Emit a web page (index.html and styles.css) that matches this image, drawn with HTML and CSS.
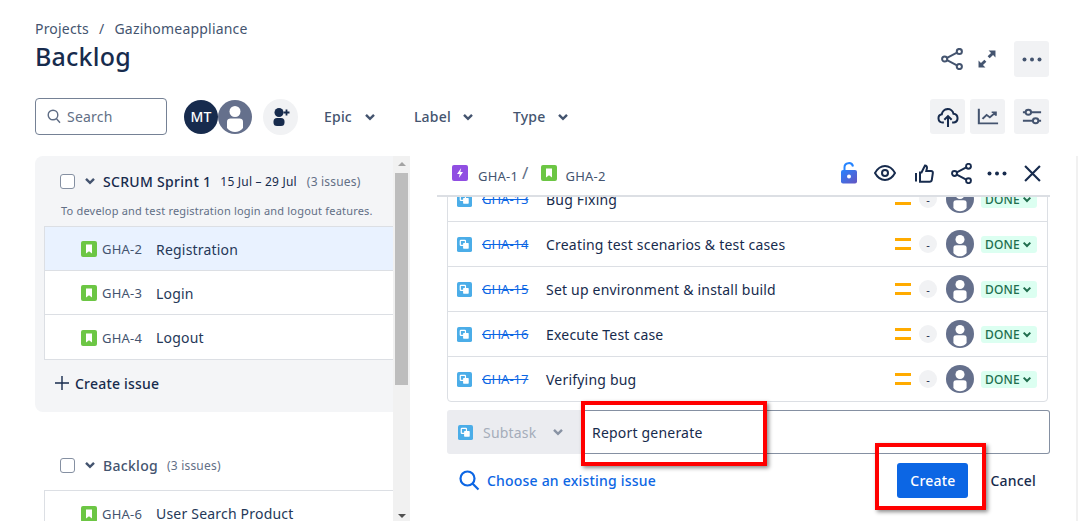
FILE: index.html
```html
<!DOCTYPE html>
<html lang="en">
<head>
    <meta charset="UTF-8">
    <title>Backlog</title>
    <link rel="stylesheet" href="styles.css">
</head>
<body>
    <svg class="sprites" width="0" height="0">
        <symbol id="story" viewBox="0 0 16 16"><rect width="16" height="16" rx="2" fill="#6cc644"/><path d="M5 3.5h6v9l-3-2.2-3 2.2z" fill="#fff"/></symbol>
        <symbol id="subtask" viewBox="0 0 16 16"><rect width="16" height="16" rx="2" fill="#4bade8"/><rect x="3.5" y="3.5" width="5.5" height="5.5" rx=".7" fill="none" stroke="#fff" stroke-width="1.3"/><rect x="6.5" y="6.5" width="6" height="6" rx=".7" fill="#fff"/></symbol>
        <symbol id="person" viewBox="0 0 34 34"><circle cx="17" cy="17" r="17" fill="#65708c"/><circle cx="17" cy="11.5" r="5.5" fill="#fff"/><path d="M9 21.5c0-2 1.500-3 3.500-3h9c2 0 3.500 1 3.500 3V28c-2 2.500-5 4-8 4s-6-1.500-8-4z" fill="#fff"/></symbol>
        <symbol id="chev" viewBox="0 0 12 8"><path d="M2 1.800l4 4 4-4" fill="none" stroke="currentColor" stroke-width="2.400"/></symbol>
        <symbol id="share" viewBox="0 0 24 24"><g fill="none" stroke="currentColor" stroke-width="2.200"><circle cx="4" cy="12" r="2.800"/><circle cx="20" cy="3.800" r="2.800"/><circle cx="20" cy="20.200" r="2.800"/><path d="M6.600 10.700l10.800-5.600M6.600 13.300l10.800 5.600"/></g></symbol>
        <symbol id="dots" viewBox="0 0 20 4"><circle cx="2.500" cy="2" r="2" fill="currentColor"/><circle cx="10" cy="2" r="2" fill="currentColor"/><circle cx="17.500" cy="2" r="2" fill="currentColor"/></symbol>
    </svg>

    <header class="page-head">
        <div class="head-left">
            <div class="crumbs"><span>Projects</span><span class="crumb-sep">/</span><span>Gazihomeappliance</span></div>
            <h1>Backlog</h1>
        </div>
        <div class="head-actions">
            <svg class="ic-share" width="22" height="22"><use href="#share"/></svg>
            <svg class="ic-expand" width="18" height="18" viewBox="1.500 1.500 17 17"><path d="M11.500 2h6.500v6.500l-2.300-2.300-3.200 3.200-1.900-1.900 3.200-3.200zM8.500 18H2v-6.500l2.300 2.300 3.200-3.200 1.900 1.900-3.200 3.200z" fill="currentColor"/></svg>
            <button class="tool-btn more-btn"><svg width="20" height="5"><use href="#dots"/></svg></button>
        </div>
    </header>

    <div class="toolbar">
        <div class="search">
            <svg width="14" height="15" viewBox="0 0 14 15"><circle cx="6" cy="6" r="4.800" fill="none" stroke="#5e6c84" stroke-width="1.400"/><path d="M9.500 9.800l3.500 4" stroke="#5e6c84" stroke-width="1.400"/></svg>
            <span>Search</span>
        </div>
        <div class="avatars">
            <span class="avatar-mt">MT</span>
            <svg class="avatar-person" width="34" height="34"><use href="#person"/></svg>
        </div>
        <button class="add-person">
            <svg width="20" height="20" viewBox="0 0 20 20"><circle cx="8" cy="5.500" r="4.500" fill="#172b4d"/><rect x="2.500" y="11" width="11" height="8" rx="3.500" fill="#172b4d"/><path d="M15.500 2.500v6M12.500 5.500h6" stroke="#172b4d" stroke-width="1.800"/></svg>
        </button>
        <div class="filter filter-epic">Epic <svg width="12" height="8"><use href="#chev"/></svg></div>
        <div class="filter filter-label">Label <svg width="12" height="8"><use href="#chev"/></svg></div>
        <div class="filter filter-type">Type <svg width="12" height="8"><use href="#chev"/></svg></div>
        <div class="toolbar-right">
            <button class="tool-btn"><svg width="22" height="22" viewBox="0 0 24 24" fill="none" stroke="#172b4d" stroke-width="2.200"><path d="M7.500 18H6a4.500 4.500 0 0 1-.8-8.900A6.500 6.500 0 0 1 18 8.500 4.800 4.800 0 0 1 18.500 18H16.500"/><path d="M12 23V11.500M8 15l4-4 4 4"/></svg></button>
            <button class="tool-btn"><svg width="22" height="17" viewBox="0 0 24 22" preserveAspectRatio="none" fill="none" stroke="#44546f" stroke-width="2.200"><path d="M2 1v19h21"/><path d="M6 14l4.500-5 3.500 3 6-6M16 5.500h4.500V10"/></svg></button>
            <button class="tool-btn gap-left"><svg width="20" height="17" viewBox="0 0 22 20" preserveAspectRatio="none" fill="none" stroke="#44546f" stroke-width="2.200"><path d="M1 5h3M10 5h11M1 15h11M18 15h3"/><circle cx="7" cy="5" r="3"/><circle cx="15" cy="15" r="3"/></svg></button>
        </div>
    </div>

    <main class="board">
        <section class="backlog">
            <div class="sprint">
                <div class="group-head">
                    <span class="check"></span>
                    <svg class="group-chev" width="12" height="8"><use href="#chev"/></svg>
                    <span class="group-name">SCRUM Sprint 1</span>
                    <span class="dates">15 Jul – 29 Jul</span>
                    <span class="count">(3 issues)</span>
                </div>
                <p class="goal">To develop and test registration login and logout features.</p>
                <ul class="issues">
                    <li class="selected"><svg width="16" height="16"><use href="#story"/></svg><span class="key">GHA-2</span><span>Registration</span></li>
                    <li><svg width="16" height="16"><use href="#story"/></svg><span class="key">GHA-3</span><span>Login</span></li>
                    <li><svg width="16" height="16"><use href="#story"/></svg><span class="key">GHA-4</span><span>Logout</span></li>
                </ul>
                <div class="create-issue">
                    <svg width="14" height="14" viewBox="0 0 14 14"><path d="M7 0v14M0 7h14" stroke="#172b4d" stroke-width="1.400"/></svg>
                    Create issue
                </div>
            </div>
            <div class="group-head backlog-head">
                <span class="check"></span>
                <svg class="group-chev" width="12" height="8"><use href="#chev"/></svg>
                <span class="group-name muted">Backlog</span>
                <span class="count">(3 issues)</span>
            </div>
            <ul class="issues">
                <li><svg width="16" height="16"><use href="#story"/></svg><span class="key">GHA-6</span><span>User Search Product</span></li>
            </ul>
        </section>

        <div class="scrollbar">
            <span class="arrow-up"></span>
            <span class="thumb"></span>
            <span class="arrow-down"></span>
        </div>

        <section class="detail">
            <div class="detail-head">
                <svg width="16" height="16" viewBox="0 0 16 16"><rect width="16" height="16" rx="2" fill="#904ee2"/><path d="M9.200 3L5 9h2.700L6.800 13 11 7H8.300z" fill="#fff"/></svg>
                <span class="detail-key">GHA-1</span>
                <span class="detail-sep">/</span>
                <svg class="story-ic" width="16" height="16"><use href="#story"/></svg>
                <span class="detail-key">GHA-2</span>
                <div class="detail-actions">
                    <svg width="16" height="22" viewBox="0 0 16 22"><defs><linearGradient id="lockfill" x1="0" y1="0" x2="1" y2="1"><stop offset="0" stop-color="#2684ff"/><stop offset="1" stop-color="#6554c0"/></linearGradient></defs><path d="M3.500 9V5.500a4.300 4.300 0 0 1 8.500-1" fill="none" stroke="#2684ff" stroke-width="2"/><rect y="8" width="16" height="13.500" rx="2" fill="url(#lockfill)"/><circle cx="8" cy="14.500" r="2" fill="#fff"/></svg>
                    <svg width="22" height="16" viewBox="0 0 22 16" fill="none" stroke="#172b4d" stroke-width="2"><path d="M1 8c2.500-4.500 6-7 10-7s7.500 2.500 10 7c-2.500 4.500-6 7-10 7S3.500 12.500 1 8z"/><circle cx="11" cy="8" r="3"/></svg>
                    <svg class="ic-like" width="19" height="19" viewBox="0 0 19 19" fill="none" stroke="#172b4d" stroke-width="2"><path d="M1 9v8.500M5 8.500h1.500L10 1.500c1.500 0 2 1 2 2.500L11.300 7H16c1.500 0 2 1 1.800 2.300l-1 6.500c-.2 1.200-1 1.900-2.200 1.900H5z"/></svg>
                    <svg width="21" height="21"><use href="#share"/></svg>
                    <svg class="ic-more" width="20" height="5"><use href="#dots"/></svg>
                    <svg width="17" height="17" viewBox="0 0 16 16"><path d="M1 1l14 14M15 1L1 15" stroke="#172b4d" stroke-width="2"/></svg>
                </div>
            </div>

            <ul class="subtasks">
                <li><svg width="15" height="15"><use href="#subtask"/></svg><span class="sub-key">GHA-13</span><span class="sub-name">Bug Fixing</span><span class="priority"></span><span class="point">-</span><svg width="28" height="28"><use href="#person"/></svg><span class="status">DONE<svg width="10" height="7"><use href="#chev"/></svg></span></li>
                <li><svg width="15" height="15"><use href="#subtask"/></svg><span class="sub-key">GHA-14</span><span class="sub-name">Creating test scenarios &amp; test cases</span><span class="priority"></span><span class="point">-</span><svg width="28" height="28"><use href="#person"/></svg><span class="status">DONE<svg width="10" height="7"><use href="#chev"/></svg></span></li>
                <li><svg width="15" height="15"><use href="#subtask"/></svg><span class="sub-key">GHA-15</span><span class="sub-name">Set up environment &amp; install build</span><span class="priority"></span><span class="point">-</span><svg width="28" height="28"><use href="#person"/></svg><span class="status">DONE<svg width="10" height="7"><use href="#chev"/></svg></span></li>
                <li><svg width="15" height="15"><use href="#subtask"/></svg><span class="sub-key">GHA-16</span><span class="sub-name">Execute Test case</span><span class="priority"></span><span class="point">-</span><svg width="28" height="28"><use href="#person"/></svg><span class="status">DONE<svg width="10" height="7"><use href="#chev"/></svg></span></li>
                <li><svg width="15" height="15"><use href="#subtask"/></svg><span class="sub-key">GHA-17</span><span class="sub-name">Verifying bug</span><span class="priority"></span><span class="point">-</span><svg width="28" height="28"><use href="#person"/></svg><span class="status">DONE<svg width="10" height="7"><use href="#chev"/></svg></span></li>
            </ul>

            <div class="new-subtask">
                <div class="type-select">
                    <svg width="15" height="15"><use href="#subtask"/></svg>
                    <span>Subtask</span>
                    <svg width="12" height="8"><use href="#chev"/></svg>
                </div>
                <div class="name-input">Report generate</div>
            </div>

            <div class="form-foot">
                <a class="choose" href="#">
                    <svg width="21" height="21" viewBox="0 0 21 21" fill="none" stroke="#0c66e4" stroke-width="2.200"><circle cx="8.500" cy="8.500" r="7"/><path d="M13.500 13.500l6 6"/></svg>
                    Choose an existing issue
                </a>
                <button class="create-btn">Create</button>
                <span class="cancel">Cancel</span>
            </div>
        </section>

        <div class="page-scroll"></div>
    </main>

    <div class="callout callout-input"></div>
    <div class="callout callout-create"></div>
</body>
</html>
```

FILE: styles.css
```css
* {
    box-sizing: border-box;
}

html, body {
    height: 521px;
    overflow: hidden;
}

body {
    margin: 0;
    position: relative;
    font-family: 'Noto Sans', sans-serif;
    font-size: 14px;
    letter-spacing: 0.2px;
    color: #172b4d;
    background-color: #fff;
}

.sprites {
    position: absolute;
}

button {
    border: none;
    padding: 0;
    font-family: inherit;
    letter-spacing: inherit;
}

ul {
    list-style: none;
    margin: 0;
    padding: 0;
}

.page-head {
    display: flex;
    justify-content: space-between;
    height: 98px;
    padding: 19px 29px 0 35px;
}

.crumbs {
    display: flex;
    gap: 10px;
    height: 20px;
    line-height: 20px;
    color: #44546f;
}

h1 {
    margin: 1px 0 0;
    font-size: 25px;
    font-weight: 500;
    line-height: 32px;
}

.head-actions {
    display: flex;
    align-items: center;
    height: 36px;
    margin-top: 22px;
    color: #44546f;
}

.ic-expand {
    margin-left: 15px;
}

.tool-btn {
    display: flex;
    align-items: center;
    justify-content: center;
    width: 35px;
    height: 35px;
    border-radius: 3px;
    background-color: #f1f2f4;
    color: #44546f;
}

.more-btn {
    height: 36px;
    margin-left: 18px;
}

.toolbar {
    display: flex;
    align-items: center;
    height: 37px;
    padding: 0 29px 0 35px;
}

.search {
    display: flex;
    align-items: center;
    gap: 6px;
    width: 132px;
    height: 37px;
    padding-left: 11px;
    border: 1px solid #758195;
    border-radius: 4px;
    color: #626f86;
}

.avatars {
    display: flex;
    margin-left: 17px;
}

.avatar-mt {
    display: flex;
    align-items: center;
    justify-content: center;
    width: 34px;
    height: 34px;
    border-radius: 50%;
    background-color: #172b4d;
    color: #fff;
    font-weight: 500;
    position: relative;
    z-index: 1;
}

.add-person {
    display: flex;
    align-items: center;
    justify-content: center;
    width: 35px;
    height: 36px;
    margin-left: 11px;
    border-radius: 50%;
    background-color: #f1f2f4;
}

.filter {
    display: flex;
    align-items: center;
    font-weight: 500;
    color: #44546f;
}

.filter svg {
    color: #44546f;
}

.filter-epic {
    gap: 12px;
    margin-left: 26px;
}

.filter-label {
    gap: 11px;
    margin-left: 38px;
}

.filter-type {
    gap: 12px;
    margin-left: 39px;
}

.toolbar-right {
    display: flex;
    gap: 5px;
    margin-left: auto;
}

.gap-left {
    margin-left: 4px;
}

.board {
    display: flex;
    height: 365px;
    margin-top: 21px;
    padding-left: 35px;
}

.backlog {
    width: 358px;
    flex-shrink: 0;
    overflow: hidden;
}

.sprint {
    height: 256px;
    border-radius: 8px 0 0 8px;
    background-color: #f4f5f7;
    padding-top: 8px;
}

.group-head {
    display: flex;
    align-items: center;
    height: 34px;
    padding-left: 25px;
}

.check {
    width: 15px;
    height: 15px;
    margin-right: 9px;
    border: 1.500px solid #8590a2;
    border-radius: 3px;
    background-color: #fff;
}

.group-chev {
    color: #44546f;
    margin-right: 7px;
}

.group-name {
    font-weight: 500;
    letter-spacing: 0.3px;
    margin-right: 9px;
}

.group-name.muted {
    color: #44546f;
}

.dates {
    font-size: 12px;
    margin-right: 10px;
}

.count {
    font-size: 12px;
    color: #626f86;
}

.goal {
    margin: 3px 0 5px;
    padding-left: 26px;
    height: 20px;
    line-height: 20px;
    font-size: 11px;
    color: #626f86;
}

.issues {
    margin-left: 9px;
    border: 1px solid #dcdfe4;
    border-right: none;
    background-color: #fff;
}

.issues li {
    display: flex;
    align-items: center;
    height: 44px;
    padding: 1px 0 0 36px;
    color: #253858;
    border-bottom: 1px solid #dcdfe4;
}

.issues li:last-child {
    border-bottom: none;
}

.issues li.selected {
    background-color: #e9f2ff;
}

.key {
    width: 54px;
    margin-left: 5px;
    font-size: 13px;
    color: #44546f;
}

.create-issue {
    display: flex;
    align-items: center;
    gap: 6px;
    height: 46px;
    padding-left: 20px;
    font-weight: 500;
}

.backlog-head {
    margin-top: 36px;
    height: 34px;
}

.backlog-head + .issues {
    margin-top: 8px;
}

.scrollbar {
    position: relative;
    width: 17px;
    flex-shrink: 0;
    background-color: #f1f1f1;
}

.thumb {
    position: absolute;
    left: 2px;
    top: 17px;
    width: 13px;
    height: 212px;
    background-color: #bdbdbd;
}

.arrow-up, .arrow-down {
    position: absolute;
    left: 5px;
    border-left: 4px solid transparent;
    border-right: 4px solid transparent;
}

.arrow-up {
    top: 6px;
    border-bottom: 4px solid #a3a3a3;
}

.arrow-down {
    bottom: 3px;
    border-top: 4px solid #505050;
}

.detail {
    width: 640px;
    padding-left: 27px;
    flex-shrink: 0;
    overflow: hidden;
}

.page-scroll {
    width: 2px;
    margin-left: auto;
    background-color: #f1f1f1;
}

.detail-head {
    position: relative;
    z-index: 1;
    display: flex;
    align-items: center;
    height: 41px;
    padding: 0 9px 6px 15px;
    background-color: #fff;
    border-bottom: 2px solid #dcdfe4;
}

.detail-key {
    font-size: 13px;
    color: #44546f;
    margin-top: 7px;
    margin-left: 10px;
}

.detail-sep {
    margin-left: 4px;
    color: #626f86;
    font-size: 17px;
}

.story-ic {
    margin-left: 12px;
}

.story-ic + .detail-key {
    margin-left: 9px;
}

.detail-actions {
    display: flex;
    align-items: center;
    gap: 17px;
    margin-left: auto;
    margin-top: 1px;
}

.ic-like {
    margin-left: 2px;
}

.ic-more {
    margin-left: -2px;
}

.subtasks {
    margin: -21px 0 0 10px;
    width: 601px;
    border: 1px solid #dcdfe4;
    border-radius: 0 0 4px 4px;
}

.subtasks li {
    display: flex;
    align-items: center;
    height: 45px;
    padding-left: 9px;
    border-bottom: 1px solid #dcdfe4;
}

.subtasks li:last-child {
    height: 44px;
    border-bottom: none;
}

.sub-key {
    width: 64px;
    margin-left: 10px;
    font-size: 13px;
    letter-spacing: 0;
    color: #0c66e4;
    text-decoration: line-through;
}

.sub-name {
    flex: 1;
}

.priority {
    width: 16px;
    height: 12px;
    margin-right: 8px;
    border-top: 3px solid #ffab00;
    border-bottom: 3px solid #ffab00;
}

.point {
    display: flex;
    align-items: center;
    justify-content: center;
    width: 18px;
    height: 18px;
    margin-right: 9px;
    border-radius: 50%;
    background-color: #f1f2f4;
    font-size: 11px;
}

.status {
    display: flex;
    align-items: center;
    gap: 2px;
    width: 56px;
    height: 17px;
    margin: 0 10px 0 7px;
    padding-left: 4px;
    border-radius: 3px;
    background-color: #dcfff1;
    color: #216e4e;
    font-size: 12px;
    font-weight: 500;
}

.new-subtask {
    display: flex;
    width: 603px;
    height: 44px;
    margin: 8px 0 0 10px;
}

.type-select {
    display: flex;
    align-items: center;
    width: 134px;
    padding-left: 11px;
    border-radius: 3px 0 0 3px;
    background-color: #ebecf0;
    color: #a5adba;
}

.type-select span {
    margin: 0 16px 0 10px;
}

.type-select svg:last-child {
    color: #8993a4;
}

.name-input {
    flex: 1;
    display: flex;
    align-items: center;
    padding-left: 11px;
    border: 1px solid #8590a2;
    border-left: none;
    border-radius: 0 3px 3px 0;
}

.form-foot {
    display: flex;
    align-items: center;
    width: 603px;
    height: 35px;
    margin: 9px 0 0 10px;
    padding-left: 12px;
}

.choose {
    display: flex;
    align-items: center;
    gap: 7px;
    font-weight: 500;
    color: #0c66e4;
    text-decoration: none;
    margin-right: auto;
}

.create-btn {
    width: 71px;
    height: 35px;
    border-radius: 3px;
    background-color: #0c66e4;
    color: #fff;
    font-size: 14px;
    font-weight: 500;
}

.cancel {
    margin: 0 14px 0 22px;
    font-weight: 500;
}

/* red annotation boxes drawn over the screenshot */
.callout {
    position: absolute;
    z-index: 2;
    border: 4px solid #f00;
    box-shadow: 2px 2px 4px rgba(0, 0, 0, 0.45);
}

.callout-input {
    left: 581px;
    top: 401px;
    width: 186px;
    height: 65px;
}

.callout-create {
    left: 875px;
    top: 443px;
    width: 111px;
    height: 67px;
}
```
